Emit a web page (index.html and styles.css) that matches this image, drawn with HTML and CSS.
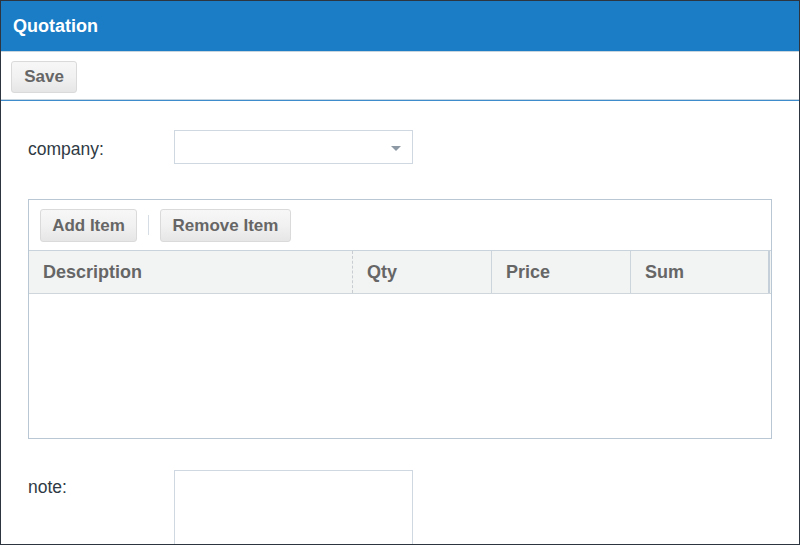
FILE: index.html
```html
<!DOCTYPE html>
<html>
<head>
<meta charset="utf-8">
<link rel="stylesheet" href="styles.css">
</head>
<body>
<div class="window">
  <div class="titlebar">Quotation</div>
  <div class="toolbar">
    <button class="btn save">Save</button>
  </div>
  <div class="form">
    <div class="row company">
      <label class="lbl">company:</label>
      <div class="select"><span class="arrow"></span></div>
    </div>
    <div class="grid">
      <div class="grid-tools">
        <button class="btn">Add Item</button>
        <span class="sep"></span>
        <button class="btn">Remove Item</button>
      </div>
      <div class="grid-head">
        <div class="col c-desc">Description</div>
        <div class="col c-qty">Qty</div>
        <div class="col c-price">Price</div>
        <div class="col c-sum">Sum</div>
        <div class="col c-end"></div>
      </div>
      <div class="grid-body"></div>
    </div>
    <div class="row note">
      <label class="lbl">note:</label>
      <div class="textarea"></div>
    </div>
  </div>
</div>
</body>
</html>
```
FILE: styles.css
```css
html, body {
  margin: 0;
  padding: 0;
  width: 800px;
  height: 545px;
  overflow: hidden;
  background: #fff;
  font-family: "Liberation Sans", Arial, sans-serif;
}
.window {
  box-sizing: border-box;
  width: 800px;
  height: 545px;
  border: 1px solid #2d3640;
  overflow: hidden;
  display: flex;
  flex-direction: column;
}
.titlebar {
  height: 50px;
  background: #1a7dc6;
  color: #fff;
  font-weight: bold;
  font-size: 18px;
  line-height: 50px;
  padding-left: 12px;
  border-bottom: 1px solid #c8d4de;
  flex: none;
}
.toolbar {
  border-bottom: 1px solid #3f8ccc;
  box-shadow: inset 0 -1px 0 #c8d4de;
  padding: 9px 0 0 10px;
  box-sizing: content-box;
  height: 39px;
  flex: none;
}
.btn {
  font-family: "Liberation Sans", Arial, sans-serif;
  font-weight: bold;
  font-size: 17px;
  color: #666;
  height: 32px;
  border: 1px solid #dadada;
  border-radius: 3px;
  background: linear-gradient(#f7f7f7 0%, #f1f1f1 50%, #e6e6e6 100%);
  padding: 0;
  margin: 0;
}
.save {
  width: 66px;
}
.form {
  padding: 29px 0 0 27px;
}
.row {
  display: flex;
}
.lbl {
  width: 146px;
  font-size: 17.5px;
  color: #2f3a44;
  flex: none;
}
.company .lbl {
  padding-top: 9px;
}
.select {
  width: 237px;
  height: 32px;
  border: 1px solid #cfd8e1;
  position: relative;
}
.arrow {
  position: absolute;
  right: 11px;
  top: 15px;
  width: 0;
  height: 0;
  border-left: 5px solid transparent;
  border-right: 5px solid transparent;
  border-top: 5px solid #8d9aa6;
}
.grid {
  margin-top: 35px;
  width: 742px;
  height: 238px;
  border: 1px solid #b9c7d4;
  display: flex;
  flex-direction: column;
}
.grid-tools {
  height: 50px;
  box-sizing: border-box;
  padding: 9px 0 0 11px;
  display: flex;
  align-items: flex-start;
}
.grid-tools .btn {
  height: 33px;
}
.grid-tools .btn:first-child {
  width: 97px;
}
.grid-tools .btn:last-child {
  width: 131px;
}
.sep {
  width: 1px;
  height: 20px;
  background: #d6dde4;
  margin: 6px 11px 0 11px;
}
.grid-head {
  height: 42px;
  border-top: 1px solid #c9d3dc;
  border-bottom: 1px solid #cfd6dc;
  background: #f2f4f4;
  display: flex;
}
.col {
  box-sizing: border-box;
  font-weight: bold;
  font-size: 18px;
  color: #666;
  line-height: 42px;
  padding-left: 14px;
  border-right: 1px solid #cdd5dc;
}
.c-desc { width: 324px; border-right-style: dashed; border-right-color: #c8cdd2; }
.c-qty { width: 139px; }
.c-price { width: 139px; }
.c-sum { width: 139px; border-right: 2px solid #c4cfd9; }
.c-end { width: 1px; padding: 0; border: none; }
.grid-body {
  flex: 1;
}
.note {
  margin-top: 31px;
}
.note .lbl {
  padding-top: 7px;
}
.textarea {
  width: 237px;
  height: 90px;
  border: 1px solid #cfd8e1;
}
```
